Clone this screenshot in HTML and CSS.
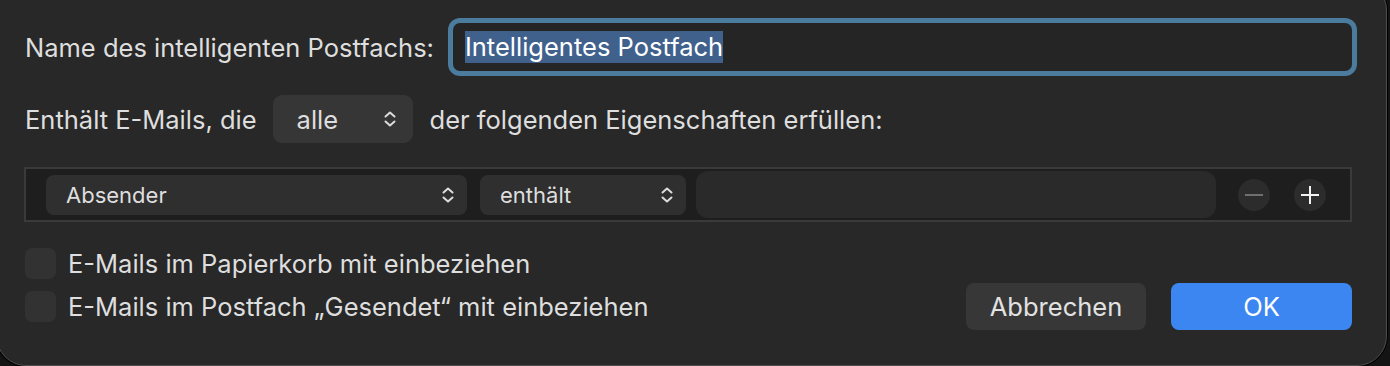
FILE: index.html
```html
<!DOCTYPE html>
<html>
<head>
  <link rel="stylesheet" href="styles.css">
</head>
<body>
  <div class="sheet">
    <div class="row name-row">
      <span class="label">Name des intelligenten Postfachs:</span>
      <div class="name-field"><span class="selected">Intelligentes Postfach</span></div>
    </div>

    <div class="row match-row">
      <span class="label">Enthält E-Mails, die</span>
      <div class="popup popup-all">
        <span>alle</span>
        <svg class="chevrons" width="14" height="18" viewBox="0 0 14 18"><path d="M2.5 6.5 L7 2.5 L11.5 6.5 M2.5 11.5 L7 15.5 L11.5 11.5"/></svg>
      </div>
      <span class="label">der folgenden Eigenschaften erfüllen:</span>
    </div>

    <div class="criteria">
      <div class="popup popup-field">
        <span>Absender</span>
        <svg class="chevrons" width="14" height="18" viewBox="0 0 14 18"><path d="M2.5 6.5 L7 2.5 L11.5 6.5 M2.5 11.5 L7 15.5 L11.5 11.5"/></svg>
      </div>
      <div class="popup popup-op">
        <span>enthält</span>
        <svg class="chevrons" width="14" height="18" viewBox="0 0 14 18"><path d="M2.5 6.5 L7 2.5 L11.5 6.5 M2.5 11.5 L7 15.5 L11.5 11.5"/></svg>
      </div>
      <div class="value-field"></div>
      <div class="round-btn minus">
        <svg width="20" height="20" viewBox="0 0 20 20"><path d="M1 10 H19"/></svg>
      </div>
      <div class="round-btn plus">
        <svg width="20" height="20" viewBox="0 0 20 20"><path d="M1 10 H19 M10 1 V19"/></svg>
      </div>
    </div>

    <div class="bottom">
      <div class="options">
        <div class="option"><span class="checkbox"></span><span class="label">E-Mails im Papierkorb mit einbeziehen</span></div>
        <div class="option"><span class="checkbox"></span><span class="label">E-Mails im Postfach „Gesendet“ mit einbeziehen</span></div>
      </div>
      <div class="buttons">
        <button class="btn">Abbrechen</button>
        <button class="btn primary">OK</button>
      </div>
    </div>
  </div>
</body>
</html>
```

FILE: styles.css
```css
html, body {
  margin: 0;
  height: 100%;
  background-color: #141414;
  overflow: hidden;
}

body {
  font-family: Inter, "Noto Sans", sans-serif;
  font-size: 25.5px;
  color: #dedede;
}

.sheet {
  box-sizing: border-box;
  height: 386px;
  margin: -20px 3px 0 -4px;
  padding: 42px 34px 0 28px;
  background-color: #282828;
  border: 1px solid #4e4e4e;
  border-radius: 30px;
  box-shadow: 0 0 0 1px #000;
}

.row {
  display: flex;
  align-items: center;
}

.name-row {
  height: 48px;
}

.name-row .label {
  margin-right: 19px;
}

.name-field {
  flex: 1;
  height: 48px;
  box-sizing: border-box;
  display: flex;
  align-items: center;
  padding-left: 12px;
  background-color: #252525;
  border-radius: 7px;
  box-shadow: 0 0 0 5px #4b7c9e;
}

.selected {
  background-color: #40618c;
  color: #ffffff;
  line-height: 32px;
}

.match-row {
  margin-top: 24px;
  height: 48px;
}

.popup {
  display: flex;
  align-items: center;
  justify-content: space-between;
  box-sizing: border-box;
  border-radius: 9px;
}

.chevrons path {
  fill: none;
  stroke: #dcdcdc;
  stroke-width: 2;
  stroke-linecap: round;
  stroke-linejoin: round;
}

.popup-all {
  width: 140px;
  height: 48px;
  margin: 0 17px 0 16px;
  padding: 0 16px 0 24px;
  background-color: #363636;
}

.criteria {
  display: flex;
  align-items: center;
  box-sizing: border-box;
  height: 55px;
  margin: 24px 0 0 -1px;
  padding: 0 0 0 20px;
  background-color: #1e1e1e;
  border: 2px solid #3a3a3a;
}

.popup-field,
.popup-op {
  height: 40px;
  padding: 0 12px 0 20px;
  background-color: #2f2f2f;
  border-radius: 8px;
  font-size: 22px;
}

.popup-field {
  width: 421px;
}

.popup-op {
  width: 206px;
  margin-left: 13px;
}

.value-field {
  width: 520px;
  height: 47px;
  margin-left: 10px;
  background-color: #2a2a2a;
  border-radius: 12px;
}

.round-btn {
  width: 32px;
  height: 32px;
  border-radius: 50%;
  background-color: #2c2c2c;
  display: flex;
  align-items: center;
  justify-content: center;
}

.round-btn path {
  fill: none;
  stroke-width: 2;
}

.minus {
  margin-left: 22px;
}

.minus path {
  stroke: #6f6f6f;
}

.plus {
  margin-left: 24px;
}

.plus path {
  stroke: #f2f2f2;
}

.bottom {
  display: flex;
  justify-content: space-between;
  align-items: flex-end;
  margin-top: 26px;
}

.options {
  display: flex;
  flex-direction: column;
  gap: 12px;
}

.option {
  display: flex;
  align-items: center;
  height: 31px;
}

.checkbox {
  width: 31px;
  height: 31px;
  box-sizing: border-box;
  border-radius: 7px;
  background-color: #323232;
  margin-right: 12px;
}

.buttons {
  display: flex;
  gap: 25px;
  margin-bottom: -8px;
}

.btn {
  width: 180px;
  height: 47px;
  border: none;
  border-radius: 8px;
  background-color: #373737;
  color: #e2e2e2;
  font-family: inherit;
  font-size: 25.5px;
  padding: 0;
}

.btn.primary {
  width: 181px;
  background-color: #3b86f0;
  color: #ffffff;
}
```
